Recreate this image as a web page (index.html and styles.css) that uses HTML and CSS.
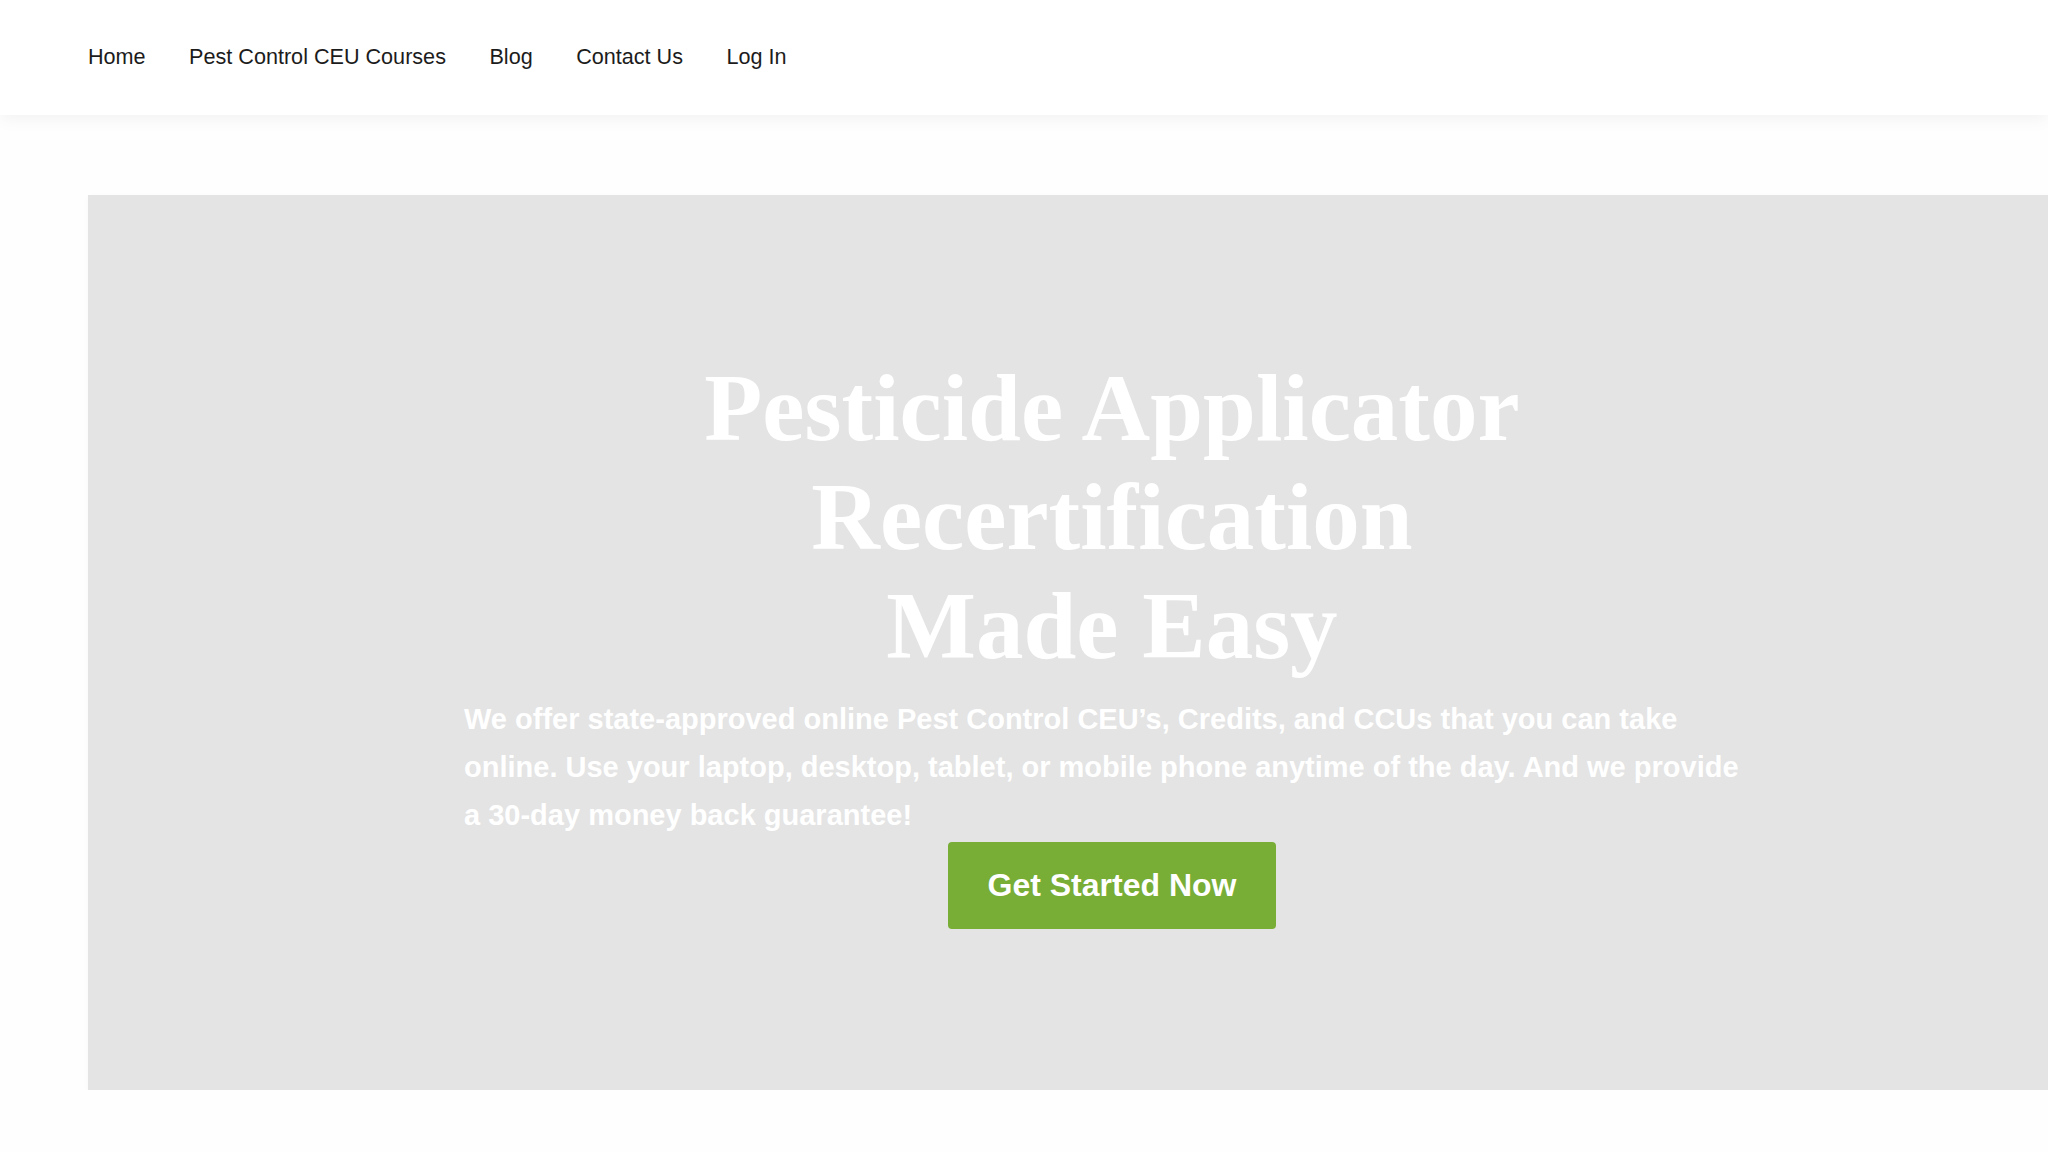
FILE: index.html
```html
<!DOCTYPE html>
<html>
<head>
    <meta charset="utf-8">
    <title>Pest Control CEU Courses</title>
    <link rel="stylesheet" href="styles.css">
</head>
<body>
    <header class="site-header">
        <nav class="main-nav">
            <a href="#">Home</a>
            <a href="#">Pest Control CEU Courses</a>
            <a href="#">Blog</a>
            <a href="#">Contact Us</a>
            <a href="#">Log In</a>
        </nav>
    </header>
    <main class="page">
        <section class="hero">
            <h1 class="hero-title">Pesticide Applicator<br>Recertification<br>Made Easy</h1>
            <p class="hero-text">We offer state-approved online Pest Control CEU’s, Credits, and CCUs that you can take online. Use your laptop, desktop, tablet, or mobile phone anytime of the day. And we provide a 30-day money back guarantee!</p>
            <a class="hero-button" href="#">Get Started Now</a>
        </section>
    </main>
</body>
</html>
```

FILE: styles.css
```css
html, body {
    margin: 0;
    padding: 0;
}
body {
    background-color: #fefefe;
    font-family: "Liberation Sans", Arial, sans-serif;
    overflow-x: hidden;
}
a {
    text-decoration: none;
}

.site-header {
    position: relative;
    z-index: 2;
    height: 115px;
    box-sizing: border-box;
    padding: 0 88px 2px;
    display: flex;
    align-items: center;
    background-color: #fff;
    box-shadow: 0 4px 16px rgba(0, 0, 0, 0.05);
}
.main-nav {
    display: flex;
    gap: 43.5px;
}
.main-nav a {
    font-size: 21.6px;
    color: #1c1c1c;
}

.page {
    padding: 80px 0 0 88px;
}

.hero {
    width: 2048px;
    box-sizing: border-box;
    padding: 159px 0 161px;
    display: flex;
    flex-direction: column;
    align-items: center;
    background-color: #e4e4e4;
    box-shadow: 0 2px 6px rgba(0, 0, 0, 0.03);
}
.hero-title {
    margin: 0 0 14px;
    font-family: "Liberation Serif", "Times New Roman", serif;
    font-weight: 700;
    font-size: 95px;
    line-height: 109px;
    text-align: center;
    color: #fff;
}
.hero-text {
    width: 1296px;
    margin: 0;
    font-size: 29px;
    font-weight: 700;
    line-height: 48px;
    color: #fff;
}
.hero-button {
    margin-top: 3px;
    padding: 0 40px;
    height: 87px;
    display: flex;
    align-items: center;
    border-radius: 4px;
    background-color: #78ad36;
    color: #fff;
    font-size: 32px;
    font-weight: 700;
}
```
